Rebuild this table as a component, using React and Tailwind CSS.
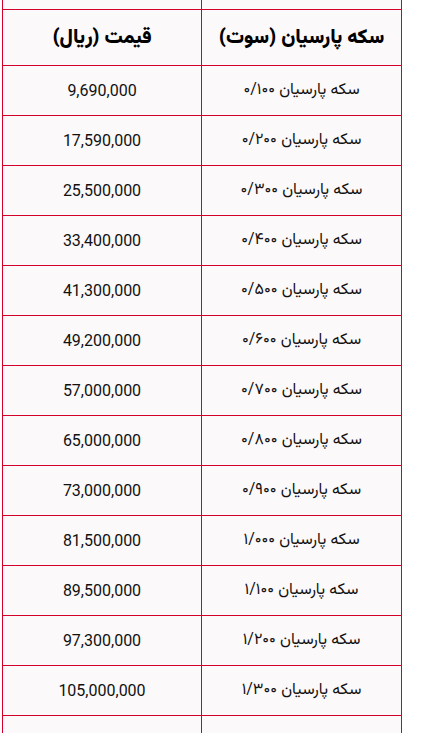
import React from 'react';

const rows = [
  ['۰/۱۰۰', '9,690,000'],
  ['۰/۲۰۰', '17,590,000'],
  ['۰/۳۰۰', '25,500,000'],
  ['۰/۴۰۰', '33,400,000'],
  ['۰/۵۰۰', '41,300,000'],
  ['۰/۶۰۰', '49,200,000'],
  ['۰/۷۰۰', '57,000,000'],
  ['۰/۸۰۰', '65,000,000'],
  ['۰/۹۰۰', '73,000,000'],
  ['۱/۰۰۰', '81,500,000'],
  ['۱/۱۰۰', '89,500,000'],
  ['۱/۲۰۰', '97,300,000'],
  ['۱/۳۰۰', '105,000,000'],
];

const fa = { fontFamily: '"Vazirmatn", "Noto Sans Arabic", "DejaVu Sans", sans-serif' };

function Row({ name, price, h = 'h-[50px]' }) {
  return (
    <div className={`grid grid-cols-2 border-b border-b-[#d4002c] ${h}`}>
      <div className="flex items-center justify-center text-[16px] text-[#111]" style={fa}>
        {name}
      </div>
      <div
        className="flex items-center justify-center border-r border-r-[#d4002c] text-[16px] text-[#111] font-['Roboto',sans-serif]"
        dir="ltr"
      >
        {price}
      </div>
    </div>
  );
}

export default function App() {
  return (
    <div className="w-[438px] h-[733px] overflow-hidden bg-white">
      <div dir="rtl" className="ml-[2px] w-[400px] border-x border-x-[#d4002c] bg-[#fcf9fa]">
        <div className="grid grid-cols-2 border-b border-b-[#d4002c] h-[10px]">
          <div />
          <div className="border-r border-r-[#d4002c]" />
        </div>
        <div className="grid grid-cols-2 border-b border-b-[#d4002c] h-[56px]">
          <div className="flex items-center justify-center text-[20px] font-black text-black" style={fa}>
            سکه پارسیان (سوت)
          </div>
          <div className="flex items-center justify-center border-r border-r-[#d4002c] text-[20px] font-black text-black" style={fa}>
            قیمت (ریال)
          </div>
        </div>
        {rows.map(([n, p]) => (
          <Row key={n} name={`سکه پارسیان ${n}`} price={p} />
        ))}
        <Row name="" price="" />
      </div>
    </div>
  );
}
